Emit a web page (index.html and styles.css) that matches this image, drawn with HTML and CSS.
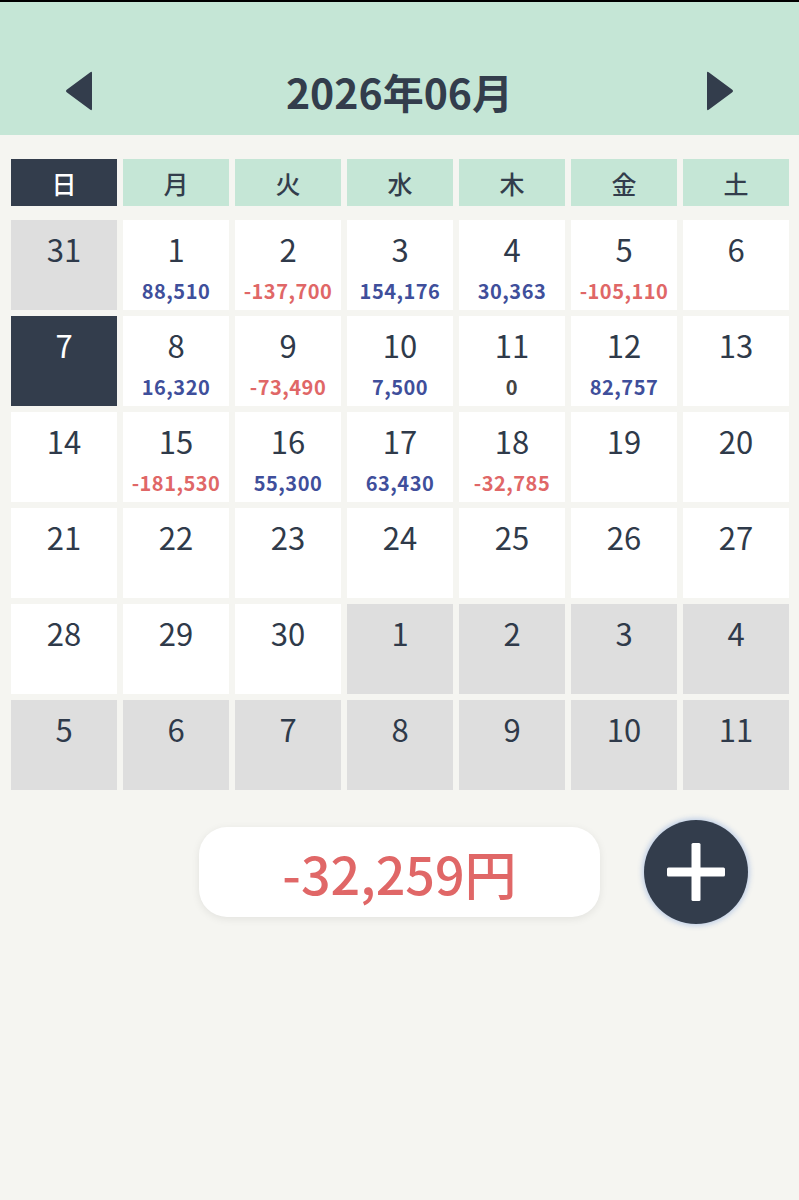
FILE: index.html
```html
<!DOCTYPE html>
<html lang="ja">
<head>
<meta charset="utf-8">
<title>カレンダー</title>
<link rel="stylesheet" href="styles.css">
</head>
<body>
<header class="header">
  <div class="nav">
    <button class="arrow" aria-label="前の月">
      <svg width="28" height="40" viewBox="0 0 28 40"><path d="M27 2 L27 38 Q27 40 25 38.5 L2 21.5 Q0 20 2 18.5 L25 1.5 Q27 0 27 2 Z" fill="#333d4c"/></svg>
    </button>
    <h1 class="title">2026年06月</h1>
    <button class="arrow" aria-label="次の月">
      <svg width="28" height="40" viewBox="0 0 28 40"><path d="M1 2 L1 38 Q1 40 3 38.5 L26 21.5 Q28 20 26 18.5 L3 1.5 Q1 0 1 2 Z" fill="#333d4c"/></svg>
    </button>
  </div>
</header>

<main class="main">
  <div class="weekdays">
    <div class="wd wd-sun">日</div>
    <div class="wd">月</div>
    <div class="wd">火</div>
    <div class="wd">水</div>
    <div class="wd">木</div>
    <div class="wd">金</div>
    <div class="wd">土</div>
  </div>

  <div class="days">
    <div class="day out"><span class="num">31</span></div>
    <div class="day"><span class="num">1</span><span class="amt plus">88,510</span></div>
    <div class="day"><span class="num">2</span><span class="amt minus">-137,700</span></div>
    <div class="day"><span class="num">3</span><span class="amt plus">154,176</span></div>
    <div class="day"><span class="num">4</span><span class="amt plus">30,363</span></div>
    <div class="day"><span class="num">5</span><span class="amt minus">-105,110</span></div>
    <div class="day"><span class="num">6</span></div>

    <div class="day today"><span class="num">7</span></div>
    <div class="day"><span class="num">8</span><span class="amt plus">16,320</span></div>
    <div class="day"><span class="num">9</span><span class="amt minus">-73,490</span></div>
    <div class="day"><span class="num">10</span><span class="amt plus">7,500</span></div>
    <div class="day"><span class="num">11</span><span class="amt zero">0</span></div>
    <div class="day"><span class="num">12</span><span class="amt plus">82,757</span></div>
    <div class="day"><span class="num">13</span></div>

    <div class="day"><span class="num">14</span></div>
    <div class="day"><span class="num">15</span><span class="amt minus">-181,530</span></div>
    <div class="day"><span class="num">16</span><span class="amt plus">55,300</span></div>
    <div class="day"><span class="num">17</span><span class="amt plus">63,430</span></div>
    <div class="day"><span class="num">18</span><span class="amt minus">-32,785</span></div>
    <div class="day"><span class="num">19</span></div>
    <div class="day"><span class="num">20</span></div>

    <div class="day"><span class="num">21</span></div>
    <div class="day"><span class="num">22</span></div>
    <div class="day"><span class="num">23</span></div>
    <div class="day"><span class="num">24</span></div>
    <div class="day"><span class="num">25</span></div>
    <div class="day"><span class="num">26</span></div>
    <div class="day"><span class="num">27</span></div>

    <div class="day"><span class="num">28</span></div>
    <div class="day"><span class="num">29</span></div>
    <div class="day"><span class="num">30</span></div>
    <div class="day out"><span class="num">1</span></div>
    <div class="day out"><span class="num">2</span></div>
    <div class="day out"><span class="num">3</span></div>
    <div class="day out"><span class="num">4</span></div>

    <div class="day out"><span class="num">5</span></div>
    <div class="day out"><span class="num">6</span></div>
    <div class="day out"><span class="num">7</span></div>
    <div class="day out"><span class="num">8</span></div>
    <div class="day out"><span class="num">9</span></div>
    <div class="day out"><span class="num">10</span></div>
    <div class="day out"><span class="num">11</span></div>
  </div>

  <div class="summary">
    <div class="total">-32,259円</div>
    <button class="add" aria-label="追加">
      <svg width="60" height="60" viewBox="0 0 60 60"><rect x="25.5" y="1" width="9" height="58" rx="1.5" fill="#fff"/><rect x="1" y="25.5" width="58" height="9" rx="1.5" fill="#fff"/></svg>
    </button>
  </div>
</main>
</body>
</html>
```

FILE: styles.css
```css
* { box-sizing: border-box; }

html, body {
  margin: 0;
  padding: 0;
}

body {
  background: #f5f5f1;
  font-family: "Noto Sans CJK JP", "Noto Sans", sans-serif;
  color: #2f3a4a;
  min-height: 1200px;
}

.header {
  border-top: 2px solid #000;
  background: #c5e6d6;
  height: 135px;
  padding-top: 44px;
}

.nav {
  height: 89px;
  display: flex;
  align-items: center;
  justify-content: space-between;
  padding: 0 65px 0 65px;
}

.arrow {
  background: none;
  border: 0;
  padding: 0;
  margin: 0;
  width: 28px;
  height: 40px;
  display: flex;
}

.title {
  margin: 0;
  font-size: 41px;
  font-weight: 700;
  color: #333d4c;
  line-height: 50px;
}

.main {
  padding: 24px 10px 0 11px;
}

.weekdays {
  display: grid;
  grid-template-columns: repeat(7, 1fr);
  column-gap: 6px;
}

.wd {
  height: 47px;
  background: #c5e6d6;
  color: #333d4c;
  display: flex;
  align-items: center;
  justify-content: center;
  font-size: 25px;
  font-weight: 500;
}

.wd-sun {
  background: #333d4c;
  color: #fff;
}

.days {
  margin-top: 14px;
  display: grid;
  grid-template-columns: repeat(7, 1fr);
  grid-auto-rows: 90px;
  gap: 6px;
}

.day {
  background: #fff;
  display: flex;
  flex-direction: column;
  align-items: center;
  padding-top: 11px;
}

.day.out { background: #dedede; }

.day.today {
  background: #333d4c;
  color: #fff;
}

.num {
  font-size: 31px;
  line-height: 36px;
  font-weight: 400;
}

.amt {
  margin-top: 12px;
  font-size: 20px;
  line-height: 24px;
  font-weight: 700;
  letter-spacing: 0.5px;
}

.amt.plus { color: #3f4f9b; }
.amt.minus { color: #e06767; }
.amt.zero { color: #444; }

.summary {
  margin-top: 30px;
  display: grid;
  grid-template-columns: 1fr 401px 1fr;
  align-items: center;
  margin-left: -11px;
  margin-right: -10px;
}

.total {
  grid-column: 2;
  height: 90px;
  background: #fff;
  border-radius: 28px;
  box-shadow: 0 2px 8px rgba(0, 0, 0, 0.08);
  display: flex;
  align-items: center;
  justify-content: center;
  color: #e06767;
  font-size: 52px;
  font-weight: 500;
}

.add {
  grid-column: 3;
  justify-self: start;
  margin-left: 44px;
  width: 104px;
  height: 104px;
  border-radius: 50%;
  border: 0;
  padding: 0;
  background: #333d4c;
  box-shadow: 0 0 5px 2px rgba(190, 205, 230, 0.9);
  display: flex;
  align-items: center;
  justify-content: center;
}
```
